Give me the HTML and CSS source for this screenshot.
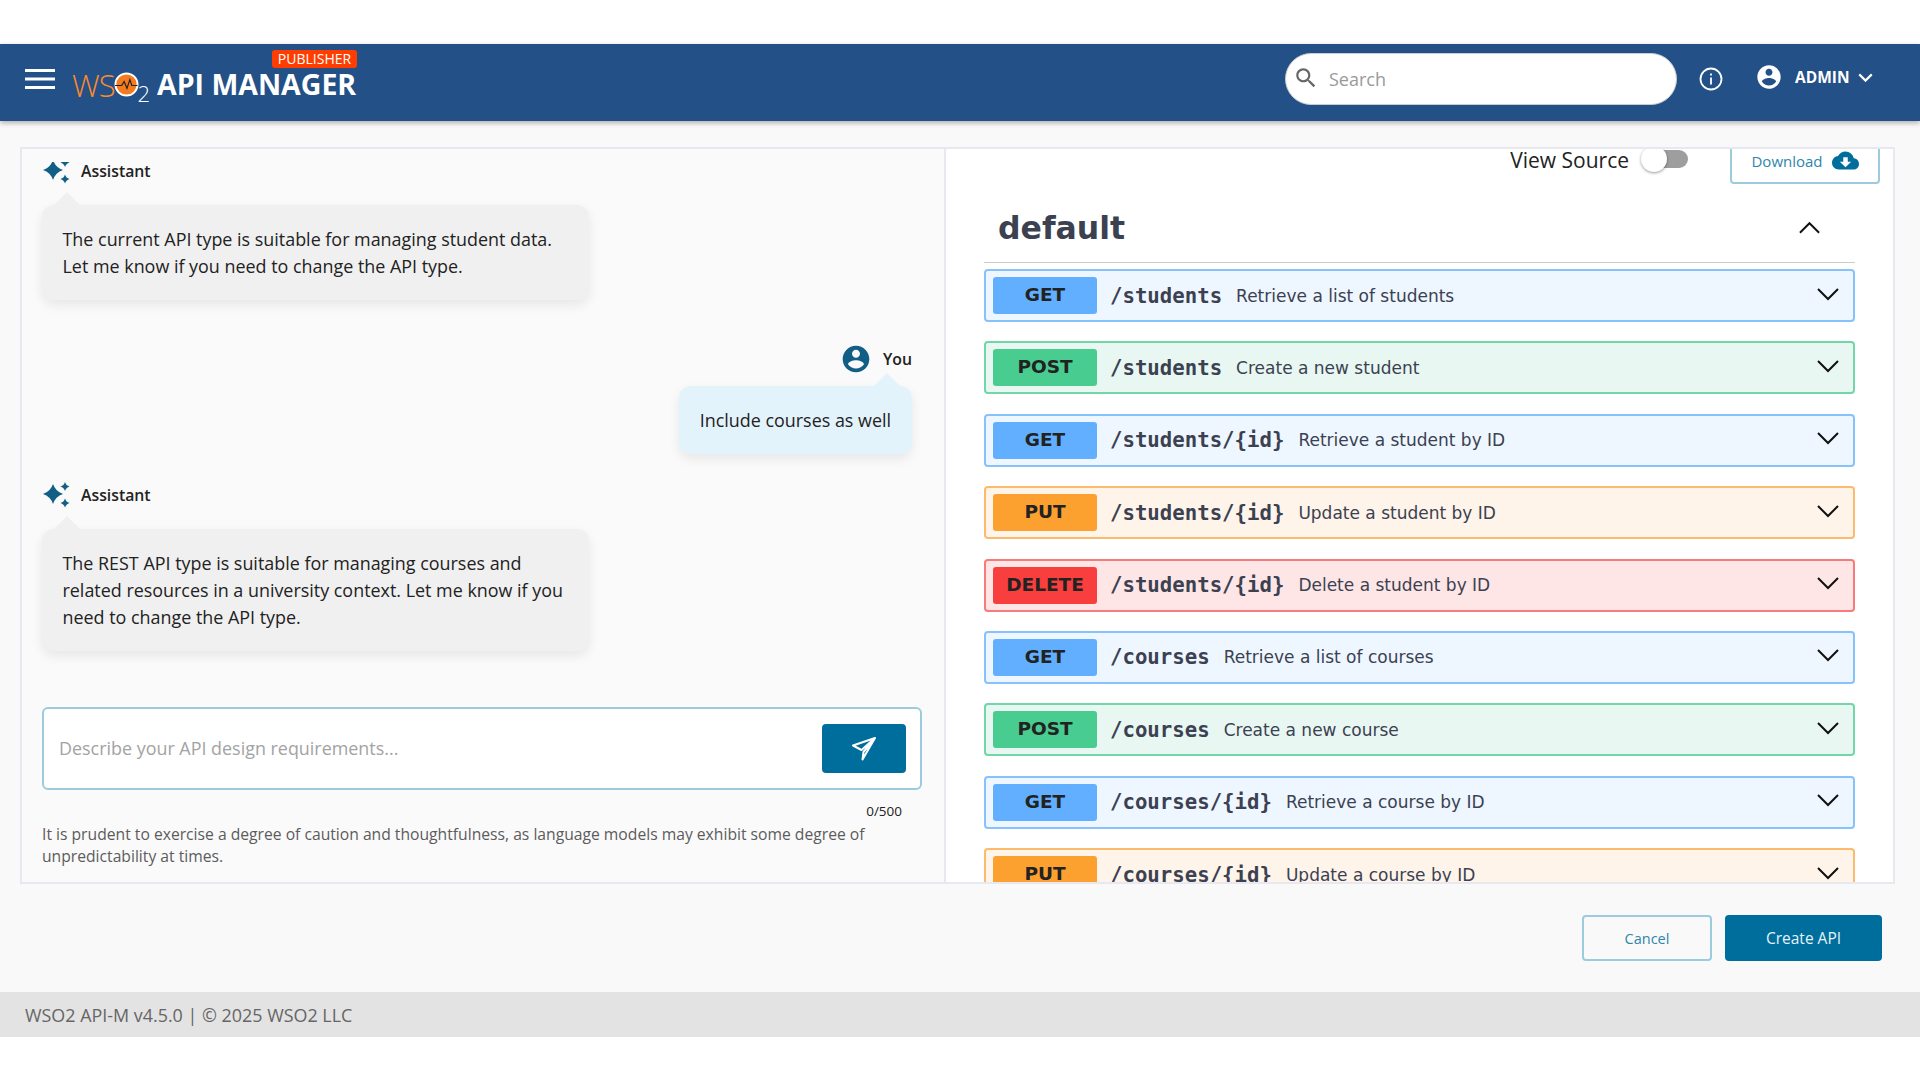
FILE: index.html
```html
<!doctype html>
<html>

<head>
    <meta charset="utf-8" />
    <title>API Manager Publisher</title>
    <link rel="stylesheet" href="styles.css">
</head>

<body>
    <svg class="defs" width="0" height="0">
        <defs>
            <symbol id="sparkle" viewBox="0 0 27 26">
                <path d="M10 2Q12.500 9.500 20 12Q12.500 14.500 10 22Q7.500 14.500 0 12Q7.500 9.500 10 2z" />
                <path d="M22 0Q23 3.500 26.500 4.500Q23 5.500 22 9Q21 5.500 17.500 4.500Q21 3.500 22 0z" />
                <path d="M22 16.500Q23 20 26.500 21Q23 22 22 25.500Q21 22 17.500 21Q21 20 22 16.500z" />
            </symbol>
            <symbol id="account" viewBox="0 0 24 24">
                <path d="M12 2C6.480 2 2 6.480 2 12s4.480 10 10 10 10-4.480 10-10S17.520 2 12 2zm0 3c1.660 0 3 1.340 3 3s-1.340 3-3 3-3-1.340-3-3 1.340-3 3-3zm0 14.200c-2.500 0-4.710-1.280-6-3.220.030-1.990 4-3.080 6-3.080 1.990 0 5.970 1.090 6 3.080-1.290 1.940-3.500 3.220-6 3.220z" />
            </symbol>
            <symbol id="chevron" viewBox="0 0 24 14">
                <path d="M2 2l10 10L22 2" fill="none" stroke="currentColor" />
            </symbol>
        </defs>
    </svg>

    <div class="top-gap"></div>

    <header class="header">
        <svg class="menu-icon" viewBox="0 0 30 20"><path d="M0 1.500h30M0 10h30M0 18.500h30" stroke="#fff" stroke-width="3" /></svg>
        <div class="brand">
            <span class="publisher">PUBLISHER</span>
            <div class="logo">
                <span class="logo-ws">WS</span>
                <svg class="logo-o" viewBox="0 0 26 26">
                    <circle cx="13" cy="13" r="11.500" fill="#f47b20" stroke="#fff" stroke-width="2" />
                    <path d="M1 14h7l2.500-4 3 7 3-9 2 6h6" fill="none" stroke="#222" stroke-width="1.200" />
                </svg>
                <span class="logo-two">2</span>
            </div>
            <span class="brand-name">API MANAGER</span>
        </div>
        <div class="search">
            <svg class="search-icon" viewBox="0 0 24 24"><path d="M15.500 14h-.790l-.280-.270C15.410 12.590 16 11.110 16 9.500 16 5.910 13.090 3 9.500 3S3 5.910 3 9.500 5.910 16 9.500 16c1.610 0 3.090-.590 4.230-1.570l.270.280v.790l5 4.990L20.490 19l-4.990-5zm-6 0C7.010 14 5 11.990 5 9.500S7.010 5 9.500 5 14 7.010 14 9.500 11.990 14 9.500 14z" /></svg>
            <span class="search-text">Search</span>
        </div>
        <svg class="info-icon" viewBox="0 0 24 24"><circle cx="12" cy="12" r="10.500" fill="none" stroke="#fff" stroke-width="1.800" /><path d="M12 10.500v7M12 6.500v2" stroke="#fff" stroke-width="1.800" /></svg>
        <div class="user">
            <svg class="user-icon"><use href="#account" /></svg>
            <span class="user-name">ADMIN</span>
            <svg class="user-chevron"><use href="#chevron" /></svg>
        </div>
    </header>

    <main class="main">
        <div class="panel">
            <section class="chat">
                <div class="messages">
                    <div class="msg">
                        <div class="author"><svg class="sparkle sparkle-cut"><use href="#sparkle" /></svg><span>Assistant</span></div>
                        <div class="bubble bubble-bot">The current API type is suitable for managing student data. Let me know if you need to change the API type.</div>
                    </div>
                    <div class="msg msg-you">
                        <div class="author"><svg class="avatar"><use href="#account" /></svg><span>You</span></div>
                        <div class="bubble bubble-you">Include courses as well</div>
                    </div>
                    <div class="msg msg-last">
                        <div class="author"><svg class="sparkle"><use href="#sparkle" /></svg><span>Assistant</span></div>
                        <div class="bubble bubble-bot">The REST API type is suitable for managing courses and related resources in a university context. Let me know if you need to change the API type.</div>
                    </div>
                </div>
                <div class="prompt">
                    <span class="placeholder">Describe your API design requirements...</span>
                    <button class="send">
                        <svg viewBox="0 0 24 24"><path d="M23 1L1 8.500l8.500 4.500zM23 1L11.500 15l-1 7.500z" fill="none" stroke="#fff" stroke-width="2" stroke-linejoin="round" /></svg>
                    </button>
                </div>
                <div class="count">0/500</div>
                <p class="note">It is prudent to exercise a degree of caution and thoughtfulness, as language models may exhibit some degree of unpredictability at times.</p>
            </section>

            <section class="spec">
                <div class="toolbar">
                    <span class="view-source">View Source</span>
                    <span class="toggle"><span class="knob"></span></span>
                    <button class="download">
                        <span>Download</span>
                        <svg viewBox="0 0 24 24"><path d="M19.350 10.040C18.670 6.590 15.640 4 12 4 9.110 4 6.600 5.640 5.350 8.040 2.340 8.360 0 10.910 0 14c0 3.310 2.690 6 6 6h13c2.760 0 5-2.240 5-5 0-2.640-2.050-4.780-4.650-4.960zM17 13l-5 5-5-5h3V9h4v4h3z" /></svg>
                    </button>
                </div>
                <div class="tag">
                    <h2>default</h2>
                    <svg class="tag-chevron"><use href="#chevron" /></svg>
                </div>
                <div class="op get"><span class="method">GET</span><span class="path">/students</span><span class="desc">Retrieve a list of students</span><svg class="op-chevron"><use href="#chevron" /></svg></div>
                <div class="op post"><span class="method">POST</span><span class="path">/students</span><span class="desc">Create a new student</span><svg class="op-chevron"><use href="#chevron" /></svg></div>
                <div class="op get"><span class="method">GET</span><span class="path">/students/{id}</span><span class="desc">Retrieve a student by ID</span><svg class="op-chevron"><use href="#chevron" /></svg></div>
                <div class="op put"><span class="method">PUT</span><span class="path">/students/{id}</span><span class="desc">Update a student by ID</span><svg class="op-chevron"><use href="#chevron" /></svg></div>
                <div class="op delete"><span class="method">DELETE</span><span class="path">/students/{id}</span><span class="desc">Delete a student by ID</span><svg class="op-chevron"><use href="#chevron" /></svg></div>
                <div class="op get"><span class="method">GET</span><span class="path">/courses</span><span class="desc">Retrieve a list of courses</span><svg class="op-chevron"><use href="#chevron" /></svg></div>
                <div class="op post"><span class="method">POST</span><span class="path">/courses</span><span class="desc">Create a new course</span><svg class="op-chevron"><use href="#chevron" /></svg></div>
                <div class="op get"><span class="method">GET</span><span class="path">/courses/{id}</span><span class="desc">Retrieve a course by ID</span><svg class="op-chevron"><use href="#chevron" /></svg></div>
                <div class="op put"><span class="method">PUT</span><span class="path">/courses/{id}</span><span class="desc">Update a course by ID</span><svg class="op-chevron"><use href="#chevron" /></svg></div>
            </section>
        </div>

        <div class="actions">
            <button class="btn btn-cancel">Cancel</button>
            <button class="btn btn-create">Create API</button>
        </div>
    </main>

    <footer class="footer">WSO2 API-M v4.5.0 | © 2025 WSO2 LLC</footer>
    <div class="bottom-gap"></div>
</body>

</html>
```

FILE: styles.css
```css
html,
body {
    margin: 0;
    height: 1080px;
    overflow: hidden;
    background-color: white;
    font-family: "Open Sans", sans-serif;
}

body {
    display: flex;
    flex-direction: column;
}

.defs {
    position: absolute;
}

.top-gap {
    height: 44px;
}

.bottom-gap {
    height: 43px;
}

/* header */

.header {
    height: 77px;
    display: flex;
    align-items: center;
    background-color: #225087;
    box-shadow: 0 2px 5px rgba(0, 0, 0, 0.3);
    position: relative;
    color: white;
}

.menu-icon {
    width: 30px;
    height: 20px;
    margin: -8px 0 0 25px;
}

.brand {
    display: flex;
    align-items: center;
    margin-left: 17px;
    position: relative;
    width: 285px;
    height: 77px;
}

.publisher {
    position: absolute;
    left: 200px;
    top: 6px;
    width: 85px;
    height: 18px;
    line-height: 18px;
    text-align: center;
    font-size: 14px;
    background-color: #ff3d00;
    border-radius: 3px;
}

.logo {
    display: flex;
    align-items: center;
    flex-shrink: 0;
    width: 85px;
    color: #ff8a2a;
    margin-top: 4px;
}

.logo-ws {
    font-size: 31px;
    font-weight: 300;
    letter-spacing: -1px;
}

.logo-o {
    width: 25px;
    height: 25px;
    flex-shrink: 0;
    margin-left: -1px;
}

.logo-two {
    color: white;
    font-size: 22px;
    font-weight: 300;
    margin: 16px 0 0 -1px;
    line-height: 20px;
}

.brand-name {
    font-size: 28.500px;
    font-weight: 700;
    line-height: 29px;
    margin-top: 3px;
    white-space: nowrap;
}

.search {
    width: 392px;
    height: 52px;
    margin: -7px 0 0 928px;
    box-sizing: border-box;
    display: flex;
    align-items: center;
    padding-left: 7px;
    background-color: white;
    border-radius: 26px;
    border: 1px solid #ccc;
}

.search-icon {
    width: 26px;
    height: 26px;
    fill: #666;
    margin-top: -2px;
}

.search-text {
    font-size: 18px;
    color: #9a9a9a;
    margin-left: 10px;
}

.info-icon {
    width: 24px;
    height: 24px;
    margin: -7px 0 0 22px;
}

.user {
    display: flex;
    align-items: center;
    margin: -11px 0 0 32px;
}

.user-icon {
    width: 28px;
    height: 28px;
    fill: white;
}

.user-name {
    font-size: 15.500px;
    font-weight: 700;
    margin-left: 12px;
}

.user-chevron {
    width: 15px;
    height: 9px;
    color: white;
    stroke-width: 3.500;
    margin-left: 8px;
}

/* main area */

.main {
    flex-grow: 1;
    background-color: #f9f9f9;
    padding: 26px 25px 0 20px;
}

.panel {
    display: flex;
    height: 737px;
    box-sizing: border-box;
    border: 2px solid #e8e9f0;
}

.chat {
    width: 924px;
    box-sizing: border-box;
    padding: 0 21px 0 20px;
    border-right: 2px solid #e8e9f0;
    background-color: #fafafa;
    flex-shrink: 0;
}

.messages {
    height: 558px;
    padding-top: 6px;
    box-sizing: border-box;
}

.msg {
    display: flex;
    flex-direction: column;
    align-items: flex-start;
}

.msg-you {
    align-items: flex-end;
    margin-top: 43px;
    padding-right: 11px;
}

.msg-last {
    margin-top: 25px;
}

.author {
    display: flex;
    align-items: center;
    height: 32px;
    font-size: 15.800px;
    font-weight: 600;
    color: #222;
}

.author span {
    margin-left: 11px;
}

.sparkle {
    width: 27px;
    height: 26px;
    fill: #115f85;
    margin-left: 1px;
}

.sparkle-cut {
    clip-path: inset(4px 0 0 0);
}

.avatar {
    width: 32px;
    height: 32px;
    fill: #115f85;
}

.bubble {
    position: relative;
    margin-top: 18px;
    padding: 21px 21px 20px;
    font-size: 17.920px;
    line-height: 27px;
    color: #222;
    border-radius: 12px;
    box-sizing: border-box;
    box-shadow: 0 5px 12px rgba(0, 0, 0, 0.08);
}

.bubble:before {
    content: '';
    position: absolute;
    top: -13px;
    border-left: 13px solid transparent;
    border-right: 13px solid transparent;
    border-bottom: 13px solid;
}

.bubble-bot {
    width: 547px;
    margin-left: -0.500px;
    background-color: #f0f0f0;
}

.bubble-bot:before {
    left: 12px;
    border-bottom-color: #f0f0f0;
}

.bubble-you {
    margin-top: 11px;
    white-space: nowrap;
    background-color: #e3f3fb;
}

.bubble-you:before {
    right: 12px;
    border-bottom-color: #e3f3fb;
}

.prompt {
    display: flex;
    align-items: center;
    justify-content: space-between;
    height: 83px;
    width: 880px;
    box-sizing: border-box;
    padding: 0 14px 0 15px;
    background-color: white;
    border: 2px solid #9ccbdd;
    border-radius: 6px;
}

.placeholder {
    font-size: 17.920px;
    color: #a3a3a3;
    margin-top: -2px;
}

.send {
    width: 84px;
    height: 49px;
    border: 0;
    padding: 0;
    border-radius: 4px;
    background-color: #006e9c;
    display: flex;
    align-items: center;
    justify-content: center;
}

.send svg {
    width: 24px;
    height: 24px;
}

.count {
    width: 860px;
    text-align: right;
    font-size: 13.500px;
    color: #222;
    margin-top: 12px;
    line-height: 19px;
}

.note {
    margin: 2px 0 0 0;
    font-size: 15.680px;
    line-height: 22px;
    color: #5c5c5c;
}

/* swagger side */

.spec {
    flex-grow: 1;
    overflow: hidden;
    padding: 0 38px 0 38px;
    background-color: white;
}

.toolbar {
    display: flex;
    align-items: center;
    justify-content: flex-end;
    height: 46px;
    margin: -11px -25px 0 0;
}

.view-source {
    font-size: 21px;
    line-height: 22px;
    color: #222;
    margin-top: -2px;
}

.toggle {
    position: relative;
    width: 46px;
    height: 18px;
    margin: -4px 0 0 13px;
    border-radius: 9px;
    background-color: #9e9e9e;
}

.knob {
    position: absolute;
    left: -1px;
    top: -4px;
    width: 26px;
    height: 26px;
    border-radius: 50%;
    background-color: white;
    box-shadow: 0 1px 3px rgba(0, 0, 0, 0.4);
}

.download {
    display: flex;
    align-items: center;
    justify-content: center;
    box-sizing: border-box;
    width: 150px;
    height: 46px;
    margin-left: 42px;
    padding: 0;
    background-color: white;
    border: 2px solid #9ccbdd;
    border-radius: 4px;
    font-family: "Open Sans", sans-serif;
    font-size: 15px;
    color: #2e86ab;
}

.download span {
    margin-top: -1px;
}

.download svg {
    width: 27px;
    height: 27px;
    fill: #006e9c;
    margin: -2px 0 0 9px;
}

.tag {
    display: flex;
    align-items: center;
    justify-content: space-between;
    box-sizing: border-box;
    height: 79px;
    padding: 10px 34px 0 14px;
    border-bottom: 1px solid #ccc;
    margin-bottom: 6px;
}

.tag h2 {
    margin: 0;
    font-family: "DejaVu Sans", sans-serif;
    font-size: 31.500px;
    font-weight: 700;
    color: #3b4151;
}

.tag-chevron {
    width: 23px;
    height: 14px;
    color: #111;
    stroke-width: 2;
    transform: rotate(180deg);
}

.op {
    display: flex;
    align-items: center;
    box-sizing: border-box;
    height: 53px;
    margin-bottom: 19.400px;
    padding: 0 13px 0 7px;
    border: 2px solid;
    border-radius: 4px;
    color: #3b4151;
    font-family: "DejaVu Sans", sans-serif;
}

.method {
    width: 104px;
    height: 37px;
    line-height: 36px;
    text-align: center;
    border-radius: 3px;
    font-size: 18.500px;
    font-weight: 700;
    color: #222;
    flex-shrink: 0;
}

.path {
    margin-left: 13px;
    font-family: "DejaVu Sans Mono", monospace;
    font-size: 20.700px;
    font-weight: 700;
}

.desc {
    margin-left: 14px;
    font-size: 17px;
    flex-grow: 1;
}

.op-chevron {
    width: 24px;
    height: 14px;
    color: #111;
    stroke-width: 2;
    margin-top: -4px;
}

.get {
    border-color: #88c2fc;
    background-color: #eef6ff;
}

.get .method {
    background-color: #61affe;
}

.post {
    border-color: #72d6a8;
    background-color: #e8f7f1;
}

.post .method {
    background-color: #49cc90;
}

.put {
    border-color: #fbbb6a;
    background-color: #fff4ea;
}

.put .method {
    background-color: #fca130;
}

.delete {
    border-color: #f97a7a;
    background-color: #fee6e6;
}

.delete .method {
    background-color: #f93e3e;
}

/* bottom buttons and footer */

.actions {
    display: flex;
    justify-content: flex-end;
    gap: 13px;
    margin: 31px 13px 0 0;
}

.btn {
    height: 46px;
    border-radius: 4px;
    font-family: "Open Sans", sans-serif;
    box-sizing: border-box;
}

.btn-cancel {
    width: 130px;
    font-size: 14.500px;
    background-color: transparent;
    border: 2px solid #9ccbdd;
    color: #2e86ab;
}

.btn-create {
    width: 157px;
    font-size: 15.500px;
    background-color: #006e9c;
    border: 0;
    color: #e3f3fb;
}

.footer {
    height: 45px;
    line-height: 47px;
    padding-left: 25px;
    background-color: #e3e3e3;
    font-size: 17.920px;
    color: #666;
}
```
